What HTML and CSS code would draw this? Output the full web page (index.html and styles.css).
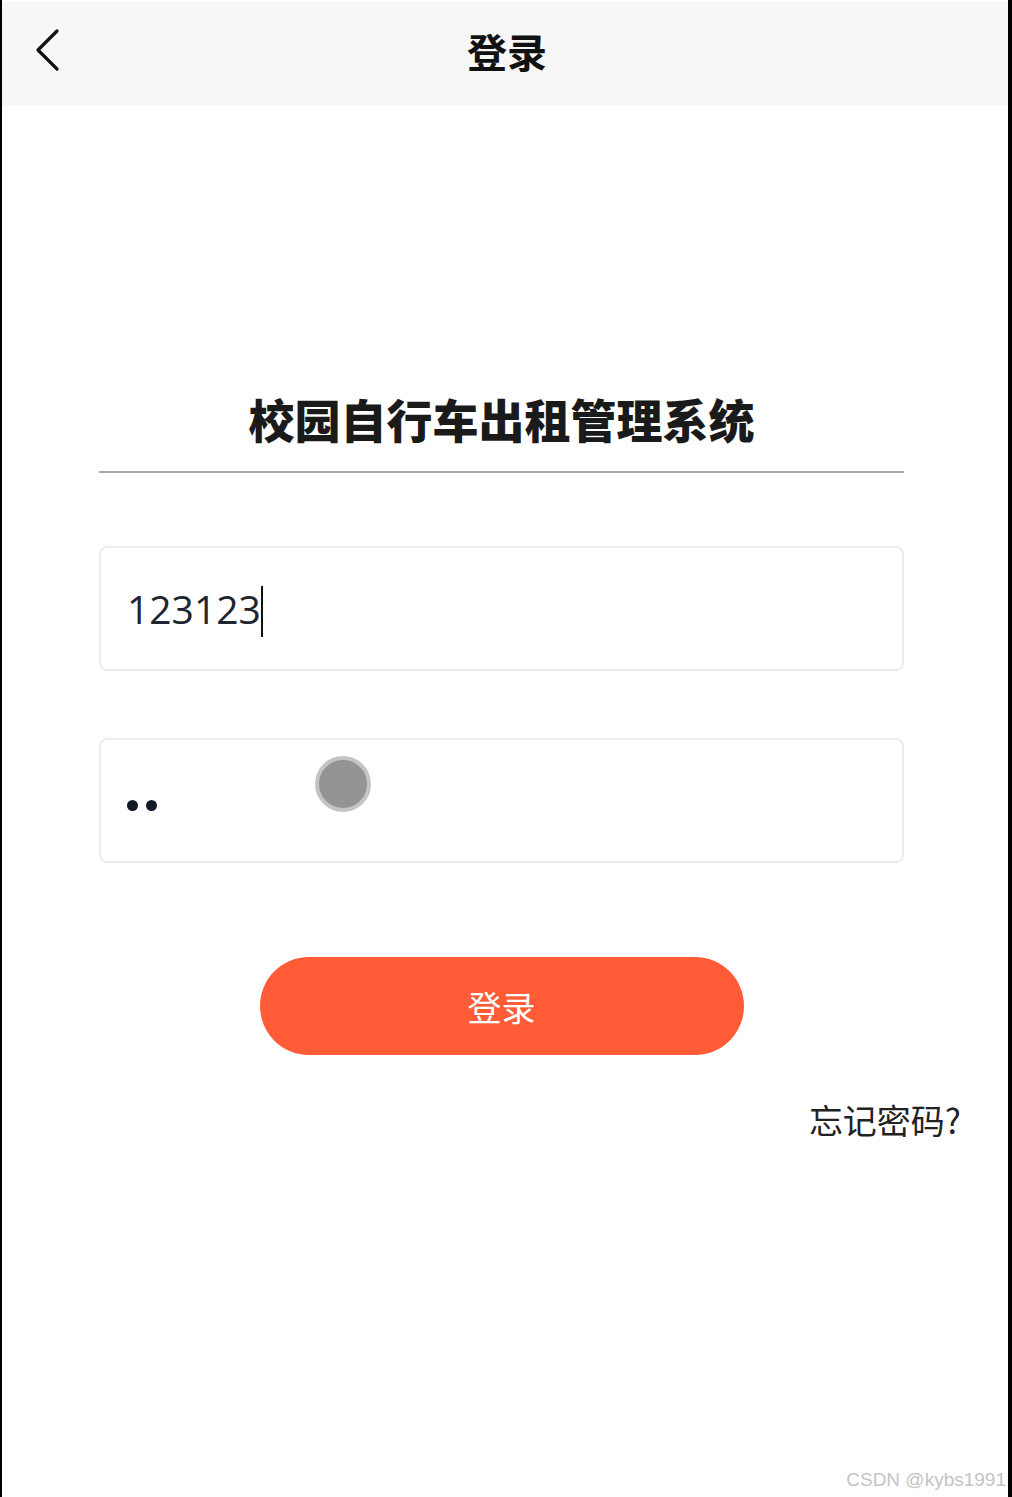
FILE: index.html
```html
<!DOCTYPE html>
<html lang="zh">
<head>
    <meta charset="UTF-8">
    <meta name="viewport" content="width=device-width, initial-scale=1.0">
    <title>登录</title>
    <link rel="stylesheet" href="styles.css">
</head>
<body>
    <div class="page">
        <div class="header">
            <span class="back">
                <svg width="28" height="44" viewBox="0 0 28 44">
                    <path d="M24 3 L5 22 L24 41" fill="none" stroke="#111" stroke-width="3.2" stroke-linecap="round" stroke-linejoin="round"/>
                </svg>
            </span>
            <div class="header-title">登录</div>
        </div>

        <div class="login">
            <h1 class="system-title">校园自行车出租管理系统</h1>

            <div class="field">
                <span class="field-text">123123</span><span class="caret"></span>
            </div>

            <div class="field field-pass">
                <span class="dots"><i></i><i></i></span>
                <span class="touch"></span>
            </div>

            <div class="btn-row">
                <button class="btn-login" type="button">登录</button>
            </div>

            <div class="forgot">忘记密码?</div>
        </div>

        <div class="watermark">CSDN @kybs1991</div>
    </div>
</body>
</html>
```

FILE: styles.css
```css
body {
    margin: 0;
    padding: 0;
    background-color: #fff;
    font-family: "Noto Sans CJK SC", "Noto Sans", sans-serif;
}

.page {
    position: relative;
    box-sizing: border-box;
    height: 1497px;
    border-left: 2px solid #000;
    border-right: 4px solid #000;
    padding-top: 2px;
    overflow: hidden;
}

.header {
    position: relative;
    height: 103px;
    background-color: #f7f7f7;
    display: flex;
    align-items: center;
    justify-content: center;
}

.back {
    position: absolute;
    left: 31px;
    top: 26px;
}

.header-title {
    font-size: 40px;
    font-weight: 700;
    color: #111;
    margin-left: 4px;
    margin-bottom: 6px;
}

.login {
    width: 805px;
    margin-left: 97px;
}

.system-title {
    margin: 280px 0 0 0;
    padding-bottom: 20px;
    border-bottom: 2px solid #a8a8a8;
    text-align: center;
    font-size: 46px;
    line-height: 66px;
    font-weight: 900;
    color: #1a1a1a;
}

.field {
    position: relative;
    box-sizing: border-box;
    height: 125px;
    margin-top: 73px;
    border: 2px solid #ececec;
    border-radius: 8px;
    padding-left: 26px;
    display: flex;
    align-items: center;
}

.field-text {
    font-family: "Open Sans", "Noto Sans", sans-serif;
    font-size: 39px;
    color: #1e2530;
}

.caret {
    display: inline-block;
    width: 2px;
    height: 51px;
    background-color: #111;
    margin-left: 0;
    margin-top: 6px;
}

.field-pass {
    margin-top: 67px;
}

.dots {
    display: flex;
    gap: 8px;
    margin-top: 10px;
}

.dots i {
    display: block;
    width: 11px;
    height: 11px;
    border-radius: 50%;
    background-color: #111a26;
}

.touch {
    position: absolute;
    left: 214px;
    top: 16px;
    width: 48px;
    height: 48px;
    border-radius: 50%;
    background-color: #949494;
    border: 4px solid #c4c4c4;
}

.btn-row {
    display: flex;
    justify-content: center;
    margin-top: 94px;
}

.btn-login {
    width: 484px;
    height: 98px;
    border: none;
    border-radius: 49px;
    background-color: #ff5b36;
    color: #fff;
    font-family: "Noto Sans CJK SC", sans-serif;
    font-size: 34px;
    cursor: pointer;
}

.forgot {
    margin-top: 40px;
    margin-right: -57px;
    text-align: right;
    font-size: 34px;
    color: #222;
}

.watermark {
    position: absolute;
    right: 2px;
    bottom: 6px;
    font-family: "Liberation Sans", Arial, sans-serif;
    font-size: 19px;
    color: #c4c4c4;
}
```
